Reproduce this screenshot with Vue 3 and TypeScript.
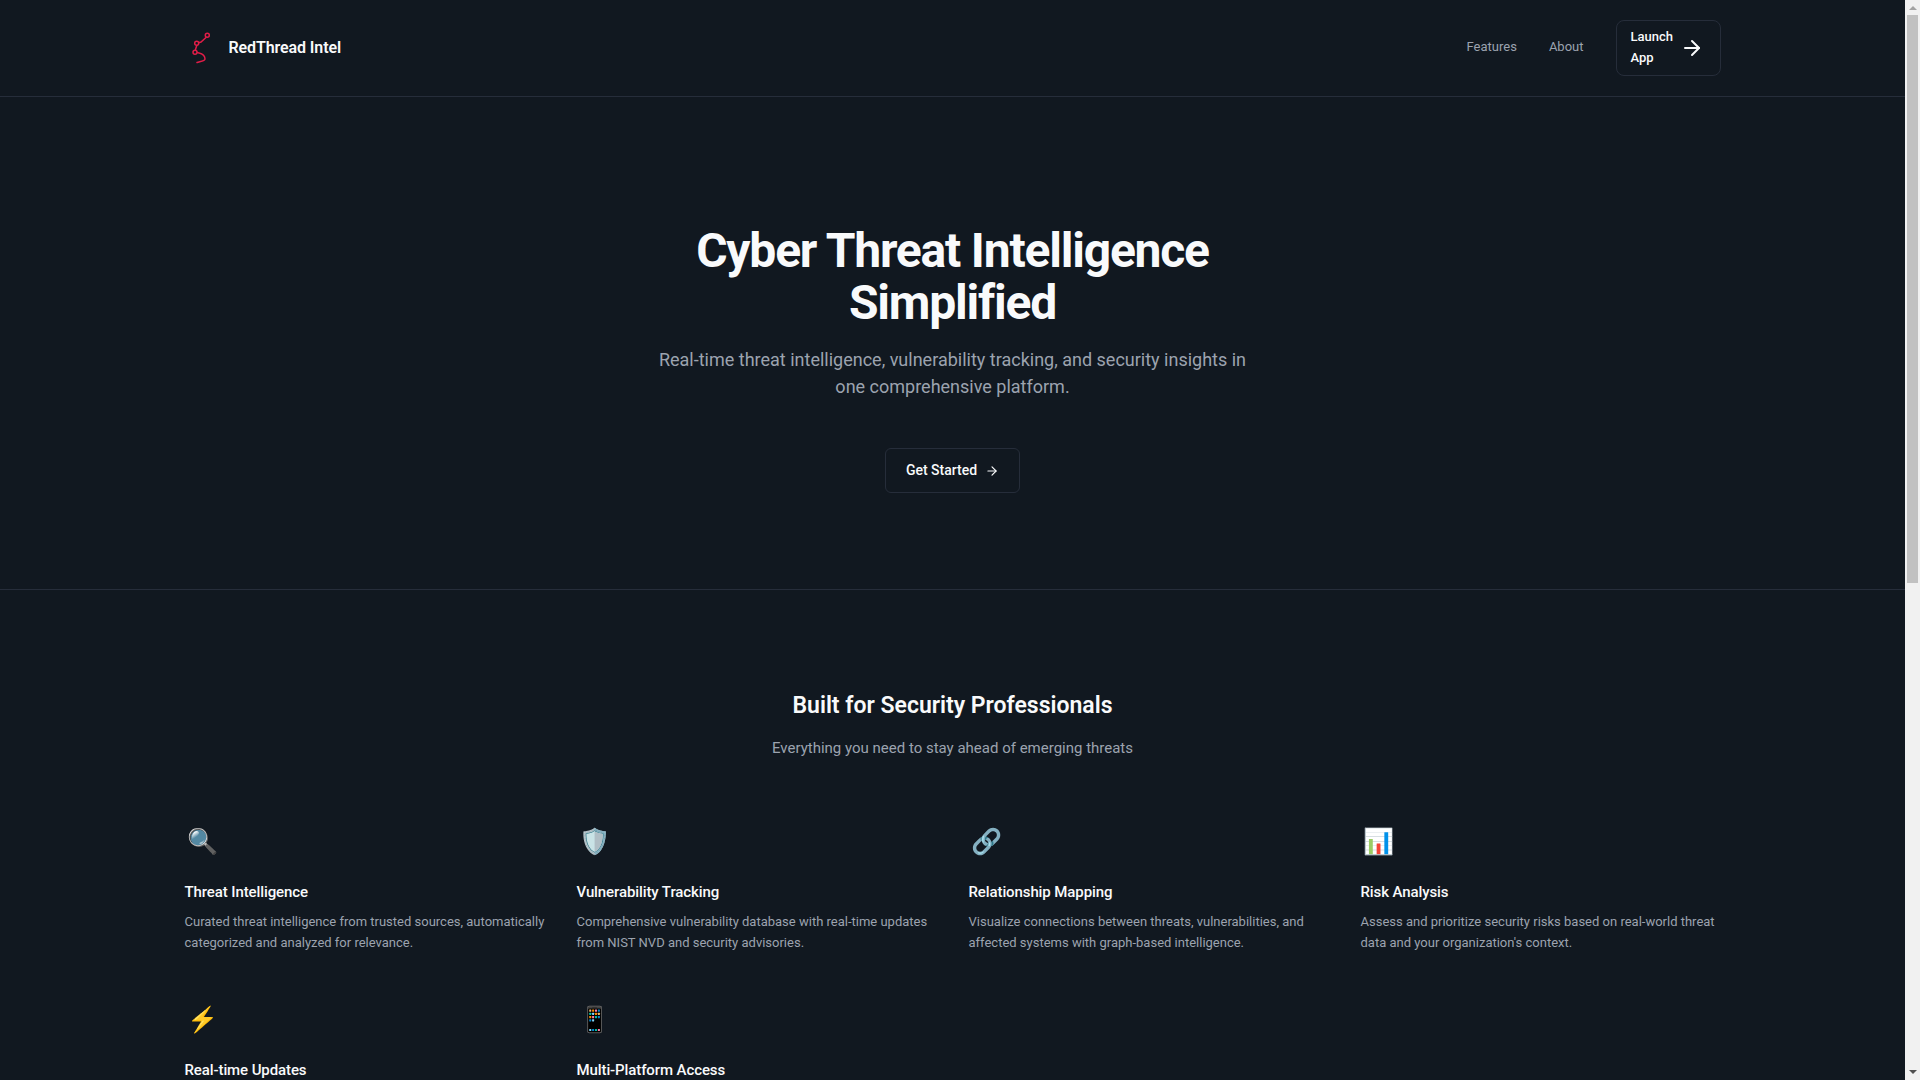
<template>
  <div class="window">
    <div class="page">
      <header class="topbar">
        <div class="container topbar-inner">
          <div class="brand">
            <svg class="logo" width="32" height="40" viewBox="0 0 32 40" fill="none">
              <path d="M21 9.5 L16 14 L12.5 15 L10.5 21.5 C10 24 12 24.5 14 25 C18 26 20 28 20 31 C20 33 15 33.5 12 34.5" stroke="#e11d48" stroke-width="1.5" stroke-linecap="round" />
              <circle cx="22.3" cy="7.3" r="2" stroke="#e11d48" stroke-width="1.5" fill="none" />
              <circle cx="11.7" cy="15.3" r="2" stroke="#e11d48" stroke-width="1.5" fill="#111820" />
              <circle cx="10" cy="24.3" r="2" stroke="#e11d48" stroke-width="1.5" fill="#111820" />
            </svg>
            <span class="brand-name">RedThread Intel</span>
          </div>
          <nav class="nav">
            <a class="nav-link">Features</a>
            <a class="nav-link">About</a>
            <button class="launch">
              <span>Launch App</span>
              <svg width="24" height="24" viewBox="0 0 24 24" fill="none" stroke="currentColor" stroke-width="2" stroke-linecap="round" stroke-linejoin="round">
                <path d="M5 12h14" />
                <path d="m12 5 7 7-7 7" />
              </svg>
            </button>
          </nav>
        </div>
      </header>

      <section class="hero">
        <h1>Cyber Threat Intelligence Simplified</h1>
        <p class="lead">Real-time threat intelligence, vulnerability tracking, and security insights in one comprehensive platform.</p>
        <button class="cta">
          <span>Get Started</span>
          <svg width="14" height="14" viewBox="0 0 24 24" fill="none" stroke="currentColor" stroke-width="2" stroke-linecap="round" stroke-linejoin="round">
            <path d="M5 12h14" />
            <path d="m12 5 7 7-7 7" />
          </svg>
        </button>
      </section>

      <section class="features">
        <div class="container">
          <h2>Built for Security Professionals</h2>
          <p class="sub">Everything you need to stay ahead of emerging threats</p>
          <div class="grid">
            <div v-for="f in features" :key="f.title" class="card">
              <div class="emoji">{{ f.icon }}</div>
              <h3>{{ f.title }}</h3>
              <p>{{ f.text }}</p>
            </div>
          </div>
        </div>
      </section>
    </div>
    <div class="scrollbar">
      <div class="arrow-up"></div>
      <div class="thumb"></div>
      <div class="arrow-down"></div>
    </div>
  </div>
</template>

<script setup lang="ts">
const features = [
  {
    icon: "🔍",
    title: "Threat Intelligence",
    text: "Curated threat intelligence from trusted sources, automatically categorized and analyzed for relevance.",
  },
  {
    icon: "🛡️",
    title: "Vulnerability Tracking",
    text: "Comprehensive vulnerability database with real-time updates from NIST NVD and security advisories.",
  },
  {
    icon: "🔗",
    title: "Relationship Mapping",
    text: "Visualize connections between threats, vulnerabilities, and affected systems with graph-based intelligence.",
  },
  {
    icon: "📊",
    title: "Risk Analysis",
    text: "Assess and prioritize security risks based on real-world threat data and your organization's context.",
  },
  {
    icon: "⚡",
    title: "Real-time Updates",
    text: "Stay informed with continuous monitoring and instant alerts on emerging threats and new vulnerabilities.",
  },
  {
    icon: "📱",
    title: "Multi-Platform Access",
    text: "Access your threat intelligence from any device with a responsive interface built for security teams.",
  },
];
</script>

<style>
html,
body {
  overflow: hidden;
  background: #111820;
}
</style>

<style scoped>
.window {
  display: flex;
  height: 100vh;
}
.page {
  flex: 1;
  min-width: 0;
  overflow: hidden;
  background: #111820;
  color: #fff;
  font-family: Roboto, "Liberation Sans", sans-serif;
}
.scrollbar {
  flex: 0 0 15px;
  display: flex;
  flex-direction: column;
  align-items: center;
  background: #f1f1f1;
}
.arrow-up {
  margin-top: 6px;
  width: 0;
  height: 0;
  border-left: 4px solid transparent;
  border-right: 4px solid transparent;
  border-bottom: 4px solid #a3a3a3;
}
.thumb {
  margin-top: 5px;
  width: 11px;
  height: 568px;
  background: #c1c1c1;
}
.arrow-down {
  margin-top: auto;
  margin-bottom: 6px;
  width: 0;
  height: 0;
  border-left: 4px solid transparent;
  border-right: 4px solid transparent;
  border-top: 4px solid #505050;
}
.container {
  max-width: 1536px;
  margin: 0 auto;
}
.topbar {
  height: 96px;
  border-bottom: 1px solid #262d3a;
}
.topbar-inner {
  height: 100%;
  display: flex;
  align-items: center;
  justify-content: space-between;
}
.brand {
  display: flex;
  align-items: center;
  gap: 12px;
}
.brand-name {
  padding-bottom: 2px;
  font-size: 16px;
  font-weight: 600;
  letter-spacing: -0.1px;
  color: #f9fafb;
}
.nav {
  display: flex;
  align-items: center;
  gap: 32px;
}
.nav-link {
  font-size: 13px;
  line-height: 20px;
  margin-top: -2px;
  color: #9ca3af;
}
.launch {
  width: 105px;
  height: 56px;
  padding: 0 16px 0 14px;
  display: flex;
  align-items: center;
  gap: 6px;
  background: transparent;
  border: 1px solid #262d3a;
  border-radius: 8px;
  color: #f9fafb;
  font-family: inherit;
  font-size: 13px;
  font-weight: 500;
  line-height: 21px;
  text-align: left;
}
.launch span {
  margin-top: -2px;
}
.launch svg {
  flex-shrink: 0;
}
.hero {
  height: 493px;
  box-sizing: border-box;
  padding-top: 128px;
  display: flex;
  flex-direction: column;
  align-items: center;
  border-bottom: 1px solid #262d3a;
  text-align: center;
}
h1 {
  margin: 0;
  max-width: 600px;
  font-size: 48px;
  line-height: 52px;
  font-weight: 700;
  letter-spacing: -1.2px;
  color: #f9fafb;
}
.lead {
  margin: 17px 0 0;
  max-width: 600px;
  font-size: 18px;
  line-height: 27px;
  color: #9ca3af;
}
.cta {
  margin-top: 48px;
  height: 45px;
  padding: 0 20px;
  display: flex;
  align-items: center;
  gap: 8px;
  background: transparent;
  border: 1px solid #262d3a;
  border-radius: 6px;
  color: #f9fafb;
  font-family: inherit;
  font-size: 14px;
  font-weight: 500;
}
.cta span {
  margin-top: -2px;
}
.features {
  padding-top: 100px;
}
h2 {
  margin: 0;
  text-align: center;
  font-size: 23px;
  line-height: 32px;
  font-weight: 600;
  color: #f9fafb;
}
.sub {
  margin: 14px 0 0;
  text-align: center;
  font-size: 15px;
  line-height: 24px;
  color: #9ca3af;
}
.grid {
  margin-top: 58px;
  display: grid;
  grid-template-columns: repeat(4, 1fr);
  column-gap: 32px;
  row-gap: 43px;
}
.emoji {
  font-size: 25px;
  line-height: 48px;
  padding-left: 2px;
}
h3 {
  margin: 15px 0 0;
  font-size: 15px;
  line-height: 22px;
  font-weight: 500;
  letter-spacing: -0.1px;
  color: #f9fafb;
}
.card p {
  margin: 8px 0 0;
  font-size: 13px;
  line-height: 21px;
  color: #9ca3af;
}
</style>
